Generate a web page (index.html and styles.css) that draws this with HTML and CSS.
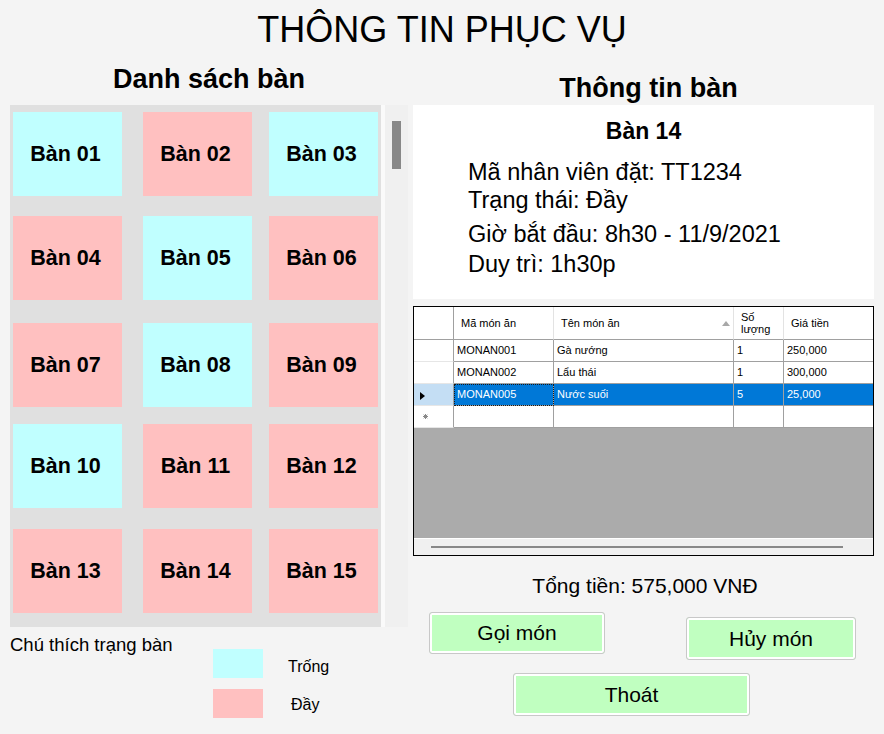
FILE: index.html
```html
<!DOCTYPE html>
<html lang="vi">
<head>
<meta charset="utf-8">
<title>Thông tin phục vụ</title>
<link rel="stylesheet" href="styles.css">
</head>
<body>
<h1 class="page-title">THÔNG TIN PHỤC VỤ</h1>
<div class="main">
  <section class="tables-col">
    <h2 class="col-title">Danh sách bàn</h2>
    <div class="tables-panel">
      <div class="tables-grid">
        <div class="tile empty">Bàn 01</div>
        <div class="tile full">Bàn 02</div>
        <div class="tile empty">Bàn 03</div>
        <div class="tile full">Bàn 04</div>
        <div class="tile empty">Bàn 05</div>
        <div class="tile full">Bàn 06</div>
        <div class="tile full">Bàn 07</div>
        <div class="tile empty">Bàn 08</div>
        <div class="tile full">Bàn 09</div>
        <div class="tile empty">Bàn 10</div>
        <div class="tile full">Bàn 11</div>
        <div class="tile full">Bàn 12</div>
        <div class="tile full">Bàn 13</div>
        <div class="tile full">Bàn 14</div>
        <div class="tile full">Bàn 15</div>
      </div>
      <div class="vscroll"><div class="vthumb"></div></div>
    </div>
    <div class="legend">
      <div class="legend-title">Chú thích trạng bàn</div>
      <div class="legend-items">
        <div class="legend-item"><span class="swatch empty"></span><span class="legend-label lbl-empty">Trống</span></div>
        <div class="legend-item"><span class="swatch full"></span><span class="legend-label lbl-full">Đầy</span></div>
      </div>
    </div>
  </section>

  <section class="info-col">
    <h2 class="col-title info-title">Thông tin bàn</h2>
    <div class="info-box">
      <div class="info-name">Bàn 14</div>
      <div class="info-line first">Mã nhân viên đặt: TT1234</div>
      <div class="info-line">Trạng thái: Đầy</div>
      <div class="info-line start">Giờ bắt đầu: 8h30 - 11/9/2021</div>
      <div class="info-line keep">Duy trì: 1h30p</div>
    </div>

    <div class="dgv">
      <div class="dgv-grid">
        <div class="hd corner"></div>
        <div class="hd">Mã món ăn</div>
        <div class="hd">Tên món ăn<span class="sort"></span></div>
        <div class="hd two">Số<br>lượng</div>
        <div class="hd last">Giá tiền</div>

        <div class="rh"></div>
        <div class="cell">MONAN001</div>
        <div class="cell">Gà nướng</div>
        <div class="cell">1</div>
        <div class="cell last">250,000</div>

        <div class="rh"></div>
        <div class="cell">MONAN002</div>
        <div class="cell">Lẩu thái</div>
        <div class="cell">1</div>
        <div class="cell last">300,000</div>

        <div class="rh sel"><span class="cur"></span></div>
        <div class="cell sel focus">MONAN005</div>
        <div class="cell sel">Nước suối</div>
        <div class="cell sel">5</div>
        <div class="cell sel last">25,000</div>

        <div class="rh newrow"><svg width="5" height="5" viewBox="0 0 5 5"><path d="M2.5 0V5M0 2.5H5M0.7 0.7L4.3 4.3M4.3 0.7L0.7 4.3" stroke="#8a8a8a" stroke-width="1"/></svg></div>
        <div class="cell"></div>
        <div class="cell"></div>
        <div class="cell"></div>
        <div class="cell last"></div>
      </div>
      <div class="dgv-empty"></div>
      <div class="hscroll"><div class="hthumb"></div></div>
    </div>

    <div class="total">Tổng tiền: 575,000 VNĐ</div>
    <div class="btn-row">
      <button class="btn btn-order">Gọi món</button>
      <button class="btn btn-cancel">Hủy món</button>
    </div>
    <button class="btn btn-exit">Thoát</button>
  </section>
</div>
</body>
</html>
```

FILE: styles.css
```css
* { box-sizing: border-box; }
html, body { margin: 0; padding: 0; }
body {
  width: 884px;
  height: 734px;
  overflow: hidden;
  background: #f4f4f4;
  color: #000;
  font-family: "Liberation Sans", Arial, sans-serif;
}

.page-title {
  margin: 0;
  padding-top: 10px;
  font-size: 36px;
  font-weight: normal;
  line-height: 40px;
  text-align: center;
}

.main {
  display: flex;
  gap: 5px;
  padding-left: 10px;
}

.tables-col { width: 398px; }

.col-title {
  margin: 13px 0 10px;
  font-size: 27px;
  font-weight: bold;
  line-height: 32px;
  text-align: center;
}
.info-title {
  margin: 22px 0 1px;
  padding-left: 10px;
}

.tables-panel {
  display: flex;
  height: 522px;
}
.tables-grid {
  width: 371px;
  background: #e0e0e0;
  display: grid;
  grid-template-columns: repeat(3, 109px);
  grid-auto-rows: 84px;
  row-gap: 20px;
  justify-content: space-between;
  align-content: start;
  padding: 7px 3px 0;
}
.tile {
  width: 109px;
  height: 84px;
  display: flex;
  align-items: center;
  justify-content: center;
  padding-right: 4px;
  font-size: 21.5px;
  font-weight: bold;
}
.tile:nth-child(3n+2) { margin-left: 2px; }
.tile:nth-child(n+7):nth-child(-n+9) { margin-top: 3px; }
.tile:nth-child(n+13) { margin-top: 1px; }
.empty { background: #c0ffff; }
.full { background: #ffc0c0; }

.vscroll {
  width: 27px;
  border-left: 4px solid #fafafa;
  background: #f0f0f0;
  padding: 16px 0 0 7px;
}
.vthumb {
  width: 9px;
  height: 48px;
  background: #888888;
}

.legend { display: flex; }
.legend-title {
  width: 203px;
  margin-top: 8px;
  font-size: 18.5px;
  line-height: 20px;
}
.legend-items {
  margin-top: 22px;
  display: flex;
  flex-direction: column;
  gap: 11px;
}
.legend-item {
  display: flex;
  align-items: center;
  gap: 25px;
  font-size: 16px;
  line-height: 18px;
}
.swatch { width: 50px; height: 29px; }
.lbl-empty { padding-top: 6px; }
.lbl-full { padding-top: 2px; padding-left: 3px; }

.info-col { width: 461px; }
.info-box {
  height: 194px;
  background: #fff;
  padding-top: 12px;
}
.info-name {
  text-align: center;
  font-size: 23px;
  font-weight: bold;
  line-height: 28px;
}
.info-line {
  padding-left: 55px;
  font-size: 23.5px;
  line-height: 28px;
}
.info-line.first { margin-top: 13px; }
.info-line.start { margin-top: 6px; }
.info-line.keep { margin-top: 2px; }

.dgv {
  margin-top: 7px;
  height: 250px;
  border: 1px solid #000;
  background: #ababab;
  display: flex;
  flex-direction: column;
  font-size: 11px;
}
.dgv-grid {
  display: grid;
  grid-template-columns: 40px 100px 180px 50px 89px;
  grid-template-rows: 33px repeat(4, 22px);
  background: #fff;
}
.hd {
  display: flex;
  align-items: center;
  padding-left: 7px;
  border-right: 1px solid #e3e3e3;
  border-bottom: 1px solid #a0a0a0;
  line-height: 13px;
}
.hd.corner { border-right-color: #a0a0a0; }
.hd.two { line-height: 12px; padding-left: 7px; }
.hd.last, .cell.last { border-right: none; }
.sort {
  margin-left: auto;
  margin-right: 3px;
  width: 0;
  height: 0;
  border-left: 4px solid transparent;
  border-right: 4px solid transparent;
  border-bottom: 5px solid #a8a8a8;
}
.rh {
  display: flex;
  align-items: center;
  padding-left: 6px;
  border-right: 1px solid #a0a0a0;
  border-bottom: 1px solid #e6e6e6;
}
.rh.sel { background: #c4def4; }
.rh.newrow { padding-left: 9px; }
.cur {
  width: 0;
  height: 0;
  border-left: 5px solid #000;
  border-top: 4px solid transparent;
  border-bottom: 4px solid transparent;
  margin-top: 2px;
}
.cell {
  display: flex;
  align-items: center;
  padding-left: 3px;
  border-right: 1px solid #a0a0a0;
  border-bottom: 1px solid #a0a0a0;
  line-height: 13px;
  white-space: nowrap;
}
.cell.sel {
  background: #0078d7;
  color: #fff;
}
.cell.focus {
  outline: 1px dotted #1a1a1a;
  outline-offset: -1px;
}
.dgv-empty { flex: 1; }
.hscroll {
  height: 17px;
  border-top: 1px solid #fff;
  background: #f0f0f0;
  padding: 7px 0 0 17px;
}
.hthumb {
  width: 412px;
  height: 2px;
  background: #888888;
}

.total {
  margin-top: 18px;
  padding-left: 3px;
  text-align: center;
  font-size: 21px;
  line-height: 24px;
}

.btn {
  font-family: "Liberation Sans", Arial, sans-serif;
  font-size: 21px;
  color: #000;
  background: #c0ffc0;
  border: 1px solid #c8c8c8;
  border-radius: 3px;
  box-shadow: inset 0 0 0 2px #fff;
  padding: 0;
  display: block;
}
.btn-row {
  display: flex;
  justify-content: space-between;
  align-items: flex-start;
  margin-top: 14px;
  padding: 0 18px 0 16px;
}
.btn-order { width: 176px; height: 42px; }
.btn-cancel { width: 170px; height: 43px; margin-top: 5px; }
.btn-exit { width: 237px; height: 43px; margin: 13px 0 0 100px; }
```
